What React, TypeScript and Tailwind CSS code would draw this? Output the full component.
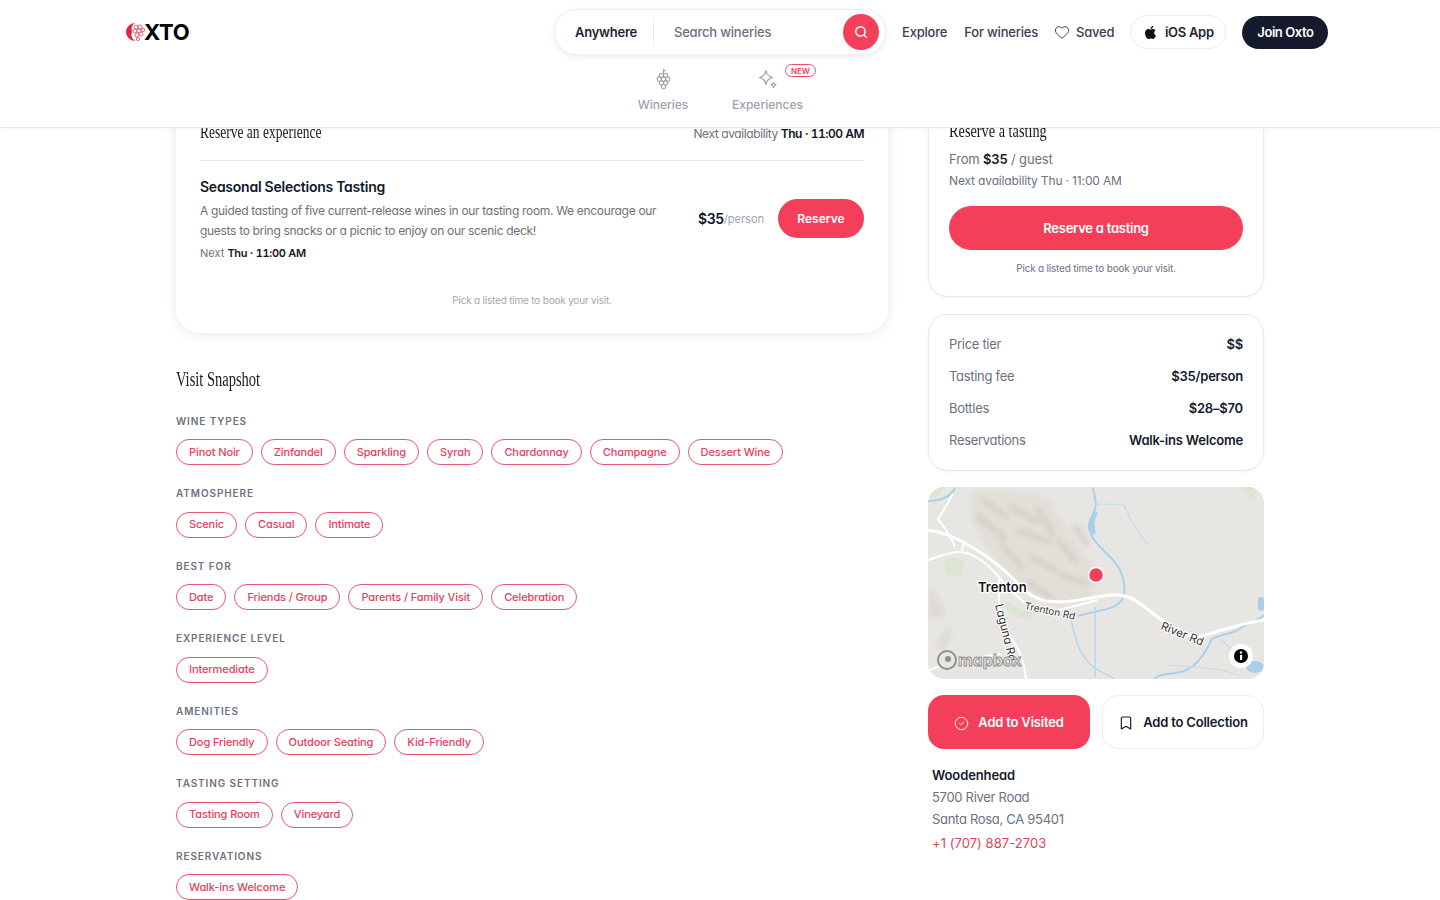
import { Heart, Search, Grape, CircleCheck, Bookmark } from "lucide-react";
import { FaApple } from "react-icons/fa";

const groups = [
  { label: "WINE TYPES", items: ["Pinot Noir", "Zinfandel", "Sparkling", "Syrah", "Chardonnay", "Champagne", "Dessert Wine"] },
  { label: "ATMOSPHERE", items: ["Scenic", "Casual", "Intimate"] },
  { label: "BEST FOR", items: ["Date", "Friends / Group", "Parents / Family Visit", "Celebration"] },
  { label: "EXPERIENCE LEVEL", items: ["Intermediate"] },
  { label: "AMENITIES", items: ["Dog Friendly", "Outdoor Seating", "Kid-Friendly"] },
  { label: "TASTING SETTING", items: ["Tasting Room", "Vineyard"] },
  { label: "RESERVATIONS", items: ["Walk-ins Welcome"] },
];

const facts = [
  ["Price tier", "$$"],
  ["Tasting fee", "$35/person"],
  ["Bottles", "$28–$70"],
  ["Reservations", "Walk-ins Welcome"],
];

const Logo = () => (
  <div className="flex items-center ml-[13px]">
    <svg width="20" height="20" viewBox="0 0 20 20">
      <path d="M10 1a9 9 0 1 0 0 18 8 8 0 0 1-3-9 8 8 0 0 1 3-9z" fill="#d8293f" />
      <g fill="none" stroke="#e0566a" strokeWidth="0.900">
        <circle cx="11" cy="5" r="2" />
        <circle cx="15" cy="5" r="2" />
        <circle cx="10" cy="9" r="2" />
        <circle cx="14" cy="9" r="2" />
        <circle cx="18" cy="8" r="1.600" />
        <circle cx="12" cy="13" r="2" />
        <circle cx="16" cy="12" r="2" />
        <circle cx="13" cy="17" r="1.600" />
      </g>
    </svg>
    <span className="text-[22px] leading-none font-bold text-black tracking-[-0.3px] -ml-[1px]">XTO</span>
  </div>
);

const SparkIcon = () => (
  <svg width="20" height="20" viewBox="0 0 20 20" fill="none" stroke="#9ca3af" strokeWidth="1.200" strokeLinejoin="round">
    <path d="M8 1.500c.6 4 2.400 6 6.500 7-4.100 1-5.900 3-6.500 7-.6-4-2.400-6-6.500-7 4.100-1 5.900-3 6.500-7z" />
    <path d="M15.500 13.500c.3 1.300 1 2 2.500 2.500-1.500.5-2.200 1.200-2.500 2.500-.3-1.300-1-2-2.500-2.500 1.500-.5 2.200-1.200 2.500-2.500z" />
  </svg>
);

const Header = () => (
  <header className="absolute top-0 left-0 right-0 z-10 h-[128px] bg-white border-b border-[#e8e9eb] shadow-[0_1px_4px_rgba(0,0,0,0.05)]">
    <div className="flex items-center px-[112px] pt-[9px]">
      <div className="w-[442px] shrink-0">
        <Logo />
      </div>
      <div className="w-[332px] shrink-0 h-[46px] rounded-full bg-white border border-[#f0f0f2] shadow-[0_2px_6px_rgba(0,0,0,0.08)] flex items-center pl-[20px] pr-[6px]">
        <span className="pt-[2px] text-[13px] font-semibold tracking-[-0.25px] text-[#1f2433]">Anywhere</span>
        <div className="w-px h-[20px] bg-[#e5e7eb] ml-[16px] mr-[20px]" />
        <span className="pt-[2px] text-[13px] tracking-[-0.2px] text-[#6b7280] font-medium">Search wineries</span>
        <div className="ml-auto w-[36px] h-[36px] rounded-full bg-[#f43f5a] flex items-center justify-center">
          <Search size={14} strokeWidth={2.5} className="text-white" />
        </div>
      </div>
      <nav className="flex items-center ml-[16px] text-[13px] font-medium tracking-[-0.2px] text-[#374151] whitespace-nowrap shrink-0">
        <span className="pt-[2px]">Explore</span>
        <span className="pt-[2px] ml-[17px]">For wineries</span>
        <Heart size={16} strokeWidth={1.5} className="ml-[16px]" />
        <span className="pt-[2px] ml-[6px]">Saved</span>
        <div className="ml-[16px] w-[96px] h-[34px] rounded-full border border-[#eceef1] flex items-center justify-center gap-[7px] text-[#1f2433] font-semibold tracking-[-0.3px]">
          <FaApple size={15} className="text-[#111]" />
          <span className="pt-[2px]">iOS App</span>
        </div>
        <div className="ml-[16px] w-[86px] h-[33px] pt-[2px] rounded-full bg-[#151a2d] flex items-center justify-center text-white font-semibold tracking-[-0.45px]">
          Join Oxto
        </div>
      </nav>
    </div>
    <div className="flex justify-center gap-[43px] mt-[7px]">
      <div className="flex flex-col items-center w-[52px]">
        <div className="h-[24px] flex items-center mt-[5px]">
          <Grape size={17} strokeWidth={1.5} className="text-[#9ca3af] -rotate-45" />
        </div>
        <span className="mt-[5px] text-[12px] font-medium text-[#9ca3af]">Wineries</span>
      </div>
      <div className="relative flex flex-col items-center w-[71px]">
        <div className="h-[24px] flex items-center mt-[5px]">
          <SparkIcon />
        </div>
        <span className="mt-[5px] text-[12px] font-medium text-[#9ca3af]">Experiences</span>
        <span className="absolute left-[53px] top-[2px] w-[31px] h-[13px] rounded-full border border-[#ef4f67] flex items-center justify-center text-[8px] font-semibold text-[#ef3f5a]">
          NEW
        </span>
      </div>
    </div>
  </header>
);

const Serif = ({ children, className }: { children: string; className: string }) => (
  <h2 className={`${className} text-[#1a1a1a] origin-left whitespace-nowrap font-['Liberation_Serif',serif]`}>{children}</h2>
);

const ExperienceCard = () => (
  <section className="h-[233px] rounded-[24px] bg-white shadow-[0_2px_12px_rgba(0,0,0,0.09)] px-[24px] pt-[22px]">
    <div className="flex items-center justify-between h-[20px]">
      <Serif className="text-[18px] leading-[20px] scale-x-[0.75]">Reserve an experience</Serif>
      <p className="pt-[3px] text-[12px] tracking-[-0.4px] text-[#6f7177]">
        Next availability <span className="font-semibold tracking-[-0.5px] tabular-nums text-[#111827]">Thu · 11:00 AM</span>
      </p>
    </div>
    <div className="mt-[18px] border-t border-[#e7e8ea]" />
    <div className="flex items-center justify-between pt-[15px]">
      <div className="w-[470px]">
        <h3 className="text-[14px] leading-[22px] font-semibold tracking-[-0.25px] text-[#111827]">Seasonal Selections Tasting</h3>
        <p className="mt-[3px] text-[12px] leading-[20px] tracking-[-0.31px] text-[#6f7177]">
          A guided tasting of five current-release wines in our tasting room. We encourage our guests to bring snacks or a picnic to enjoy on our scenic deck!
        </p>
        <p className="mt-[4px] text-[11px] leading-[16px] text-[#6f7177]">
          Next <span className="font-semibold tracking-[-0.3px] tabular-nums text-[#111827]">Thu · 11:00 AM</span>
        </p>
      </div>
      <div className="flex items-center">
        <span className="text-[14px] font-semibold tracking-[-0.3px] text-[#111827]">$35</span>
        <span className="text-[11px] text-[#9ca3af] mt-[2px]">/person</span>
        <div className="ml-[14px] w-[86px] h-[39px] rounded-full bg-[#f43f5a] flex items-center justify-center text-white text-[12px] font-semibold">
          Reserve
        </div>
      </div>
    </div>
    <p className="mt-[31px] text-center text-[10px] leading-[16px] tracking-[-0.2px] text-[#a3a7ae]">Pick a listed time to book your visit.</p>
  </section>
);

const Snapshot = () => (
  <section className="mt-[32px]">
    <Serif className="text-[20px] leading-[28px] scale-x-[0.725]">Visit Snapshot</Serif>
    <div className="mt-[19.700px] flex flex-col gap-[20px]">
      {groups.map((g) => (
        <div key={g.label}>
          <div className="h-[16px] text-[10px] leading-[16px] font-semibold tracking-[0.9px] text-[#6b7280]">{g.label}</div>
          <div className="mt-[10.500px] flex gap-[8px]">
            {g.items.map((item) => (
              <span key={item} className="h-[26px] px-[12px] rounded-full border border-[#e8566d] flex items-center text-[11px] font-medium tracking-[-0.1px] text-[#e8405b] whitespace-nowrap">
                {item}
              </span>
            ))}
          </div>
        </div>
      ))}
    </div>
  </section>
);

const MapCard = () => (
  <div className="relative h-[192px] rounded-[16px] overflow-hidden bg-[#e8e6e3]">
    <svg width="336" height="192" viewBox="0 0 336 192">
      <defs>
        <filter id="soft" x="-20%" y="-20%" width="140%" height="140%">
          <feGaussianBlur stdDeviation="2.500" />
        </filter>
      </defs>
      <g filter="url(#soft)">
        <path d="M46 4c30 0 60 0 76 8 14 30 40 50 46 80 2 16-8 24-38 26-30-6-50-30-66-50C50 50 36 30 46 4z" fill="#e2dfd9" />
        <path d="M56 14l22 16M84 20l24 14M50 30l26 20M90 44l30 10M110 22l14 24M74 58l20 22M104 70l24 14M130 54l18 20M134 88l24 8M100 96l22 14M148 40l10 16" stroke="#d6d1c9" strokeWidth="6" strokeLinecap="round" fill="none" />
        <path d="M0 100c8 4 14 10 18 30l-18 2zM6 160c6-8 10-14 14-24l4 16-10 12z" fill="#dfdbd5" />
      </g>
      <path d="M16 74c6-4 14-4 20 0l-2 14c-6 2-12 2-16-2z" fill="#dbe5d0" />
      <path d="M78 114c8 6 16 10 28 12l-6 6c-10-2-18-6-26-12z" fill="#dbe5d0" />
      <path d="M0 0h16l-8 10H0zM316 0h14l-4 12c-6-2-10-6-10-12z" fill="#dbe5d0" />
      <path d="M0 14c14 0 22-4 27-13" stroke="#a9d0e8" strokeWidth="2" fill="none" />
      <path d="M165 1c3 14 4 18 0 26-5 9-6 14 0 24 8 14 28 22 31 45 1 12 0 16-6 21-8 7-26 7-40 12" stroke="#a9d0e8" strokeWidth="2" fill="none" />
      <path d="M166 24c-5 9-6 14-2 24l4-2c-2-8-2-14 2-20z" fill="#a9d0e8" />
      <path d="M168 17c12 0 22 0 28 1 6 14 14 28 24 40" stroke="#c3dcec" strokeWidth="1.200" fill="none" />
      <path d="M142 129c6 24 8 36 20 48 8 8 18 10 24 15M167 120v70" stroke="#b6d7ec" strokeWidth="1.500" fill="none" />
      <path d="M226 192c4-6 18-4 30-8 14-5 22-20 28-32 10-6 22-4 30-12 8-4 16-6 22-12" stroke="#a9d0e8" strokeWidth="2" fill="none" />
      <path d="M292 152l18 16M240 178c20 2 50 2 70 10" stroke="#c3dcec" strokeWidth="1.200" fill="none" />
      <rect x="330" y="110" width="6" height="14" rx="3" fill="#a9d0e8" />
      <ellipse cx="327" cy="180" rx="9" ry="6" fill="#a9d0e8" />
      <path d="M0 43c14 2 24 6 35 12 20 11 40 25 55 42 10 11 18 15 28 17 28 4 56-8 74-6 14 2 22 10 36 21 12 9 22 15 39 22 22-6 44-14 69-18" stroke="#fff" strokeWidth="3" fill="none" />
      <path d="M0 73c12-4 22-8 30-8 14 0 28 10 40 24 10 12 24 28 40 34 12 4 36-4 60-10" stroke="#fff" strokeWidth="2" fill="none" />
      <path d="M27 60c-5-14-13-22-17-28 5-8 10-16 15-25M36 54l-2 10" stroke="#fff" strokeWidth="2" fill="none" />
      <path d="M71 90v24c0 20 10 32 20 50 4 8 6 18 7 28M0 184c20-10 50-14 74-17" stroke="#fff" strokeWidth="2" fill="none" />
      <text x="50" y="105" fontSize="13" fontWeight="600" fill="#111" stroke="#fff" strokeWidth="2.500" paintOrder="stroke">Trenton</text>
      <text x="96" y="122" fontSize="10" fill="#333" stroke="#fff" strokeWidth="2" paintOrder="stroke" transform="rotate(12 96 122)">Trenton Rd</text>
      <text x="67" y="118" fontSize="11.500" fill="#333" stroke="#fff" strokeWidth="2" paintOrder="stroke" transform="rotate(76 67 118)">Laguna Rd</text>
      <text x="232" y="142" fontSize="11.500" fill="#333" stroke="#fff" strokeWidth="2" paintOrder="stroke" transform="rotate(22 232 142)">River Rd</text>
      <circle cx="168" cy="88" r="7.500" fill="#f43f5a" stroke="#fff" strokeWidth="1.500" />
      <circle cx="19" cy="173" r="9" fill="#e8e6e3" stroke="#8f8f8f" strokeWidth="2" />
      <circle cx="20" cy="172" r="3" fill="#8f8f8f" />
      <text x="30" y="179" fontSize="16" fontWeight="700" fill="#e8e6e3" stroke="#8f8f8f" strokeWidth="0.900">mapbox</text>
      <circle cx="313" cy="169" r="12" fill="#fff" />
      <circle cx="313" cy="169" r="7" fill="#000" />
      <rect x="312" y="168" width="2.200" height="5" fill="#fff" />
      <circle cx="313" cy="165.500" r="1.200" fill="#fff" />
    </svg>
  </div>
);

const Sidebar = () => (
  <aside className="w-[336px] shrink-0">
    <section className="h-[197px] rounded-[20px] border border-[#e8e9eb] shadow-[0_1px_3px_rgba(0,0,0,0.05)] bg-white px-[20px] pt-[20px]">
      <Serif className="text-[18px] leading-[20px] scale-x-[0.795]">Reserve a tasting</Serif>
      <p className="mt-[8px] text-[13px] leading-[20px] tracking-[-0.15px] text-[#6b7280]">
        From <span className="font-semibold text-[#111827]">$35</span> / guest
      </p>
      <p className="mt-[2px] text-[12px] leading-[20px] tracking-[-0.15px] text-[#6b7280]">Next availability Thu · 11:00 AM</p>
      <div className="mt-[15px] h-[44px] pt-[2px] rounded-full bg-[#f43f5a] flex items-center justify-center text-white text-[13px] font-semibold tracking-[-0.25px]">
        Reserve a tasting
      </div>
      <p className="mt-[10px] text-center text-[10px] leading-[16px] tracking-[-0.2px] text-[#6b7280]">Pick a listed time to book your visit.</p>
    </section>
    <section className="mt-[17px] h-[157px] rounded-[20px] border border-[#e8e9eb] shadow-[0_1px_3px_rgba(0,0,0,0.05)] bg-white px-[20px] pt-[20px] flex flex-col gap-[12px]">
      {facts.map(([k, v]) => (
        <div key={k} className="flex justify-between items-center h-[20px] text-[13px]">
          <span className="tracking-[-0.3px] text-[#6b7280]">{k}</span>
          <span className="font-semibold tracking-[-0.2px] text-[#151a2d]">{v}</span>
        </div>
      ))}
    </section>
    <div className="mt-[16px]">
      <MapCard />
    </div>
    <div className="mt-[16px] flex gap-[12px]">
      <div className="w-[162px] h-[54px] pt-[2px] rounded-[16px] bg-[#f43f5a] flex items-center justify-center gap-[9px] text-white text-[13px] font-semibold tracking-[-0.2px]">
        <CircleCheck size={15} strokeWidth={1.5} />
        Add to Visited
      </div>
      <div className="w-[162px] h-[54px] pt-[2px] rounded-[16px] border border-[#eceef1] bg-white flex items-center justify-center gap-[9px] text-[#151a2d] text-[13px] font-semibold tracking-[-0.2px]">
        <Bookmark size={16} strokeWidth={1.75} />
        Add to Collection
      </div>
    </div>
    <div className="mt-[15px] pl-[4px] text-[13px] leading-[22px] tracking-[-0.3px] text-[#6b7280]">
      <p className="font-semibold tracking-[-0.1px] text-[#151a2d]">Woodenhead</p>
      <p>5700 River Road</p>
      <p>Santa Rosa, CA 95401</p>
      <p className="mt-[2px] tracking-[0.05px] text-[#e8405b]">+1 (707) 887-2703</p>
    </div>
  </aside>
);

export default function App() {
  return (
    <div className="relative h-[900px] overflow-hidden bg-white font-['Inter',sans-serif] [font-feature-settings:'cv11']">
      <Header />
      <main className="mx-auto w-[1088px] pt-[100px] flex items-start gap-[40px]">
        <div className="w-[712px] shrink-0">
          <ExperienceCard />
          <Snapshot />
        </div>
        <Sidebar />
      </main>
    </div>
  );
}
